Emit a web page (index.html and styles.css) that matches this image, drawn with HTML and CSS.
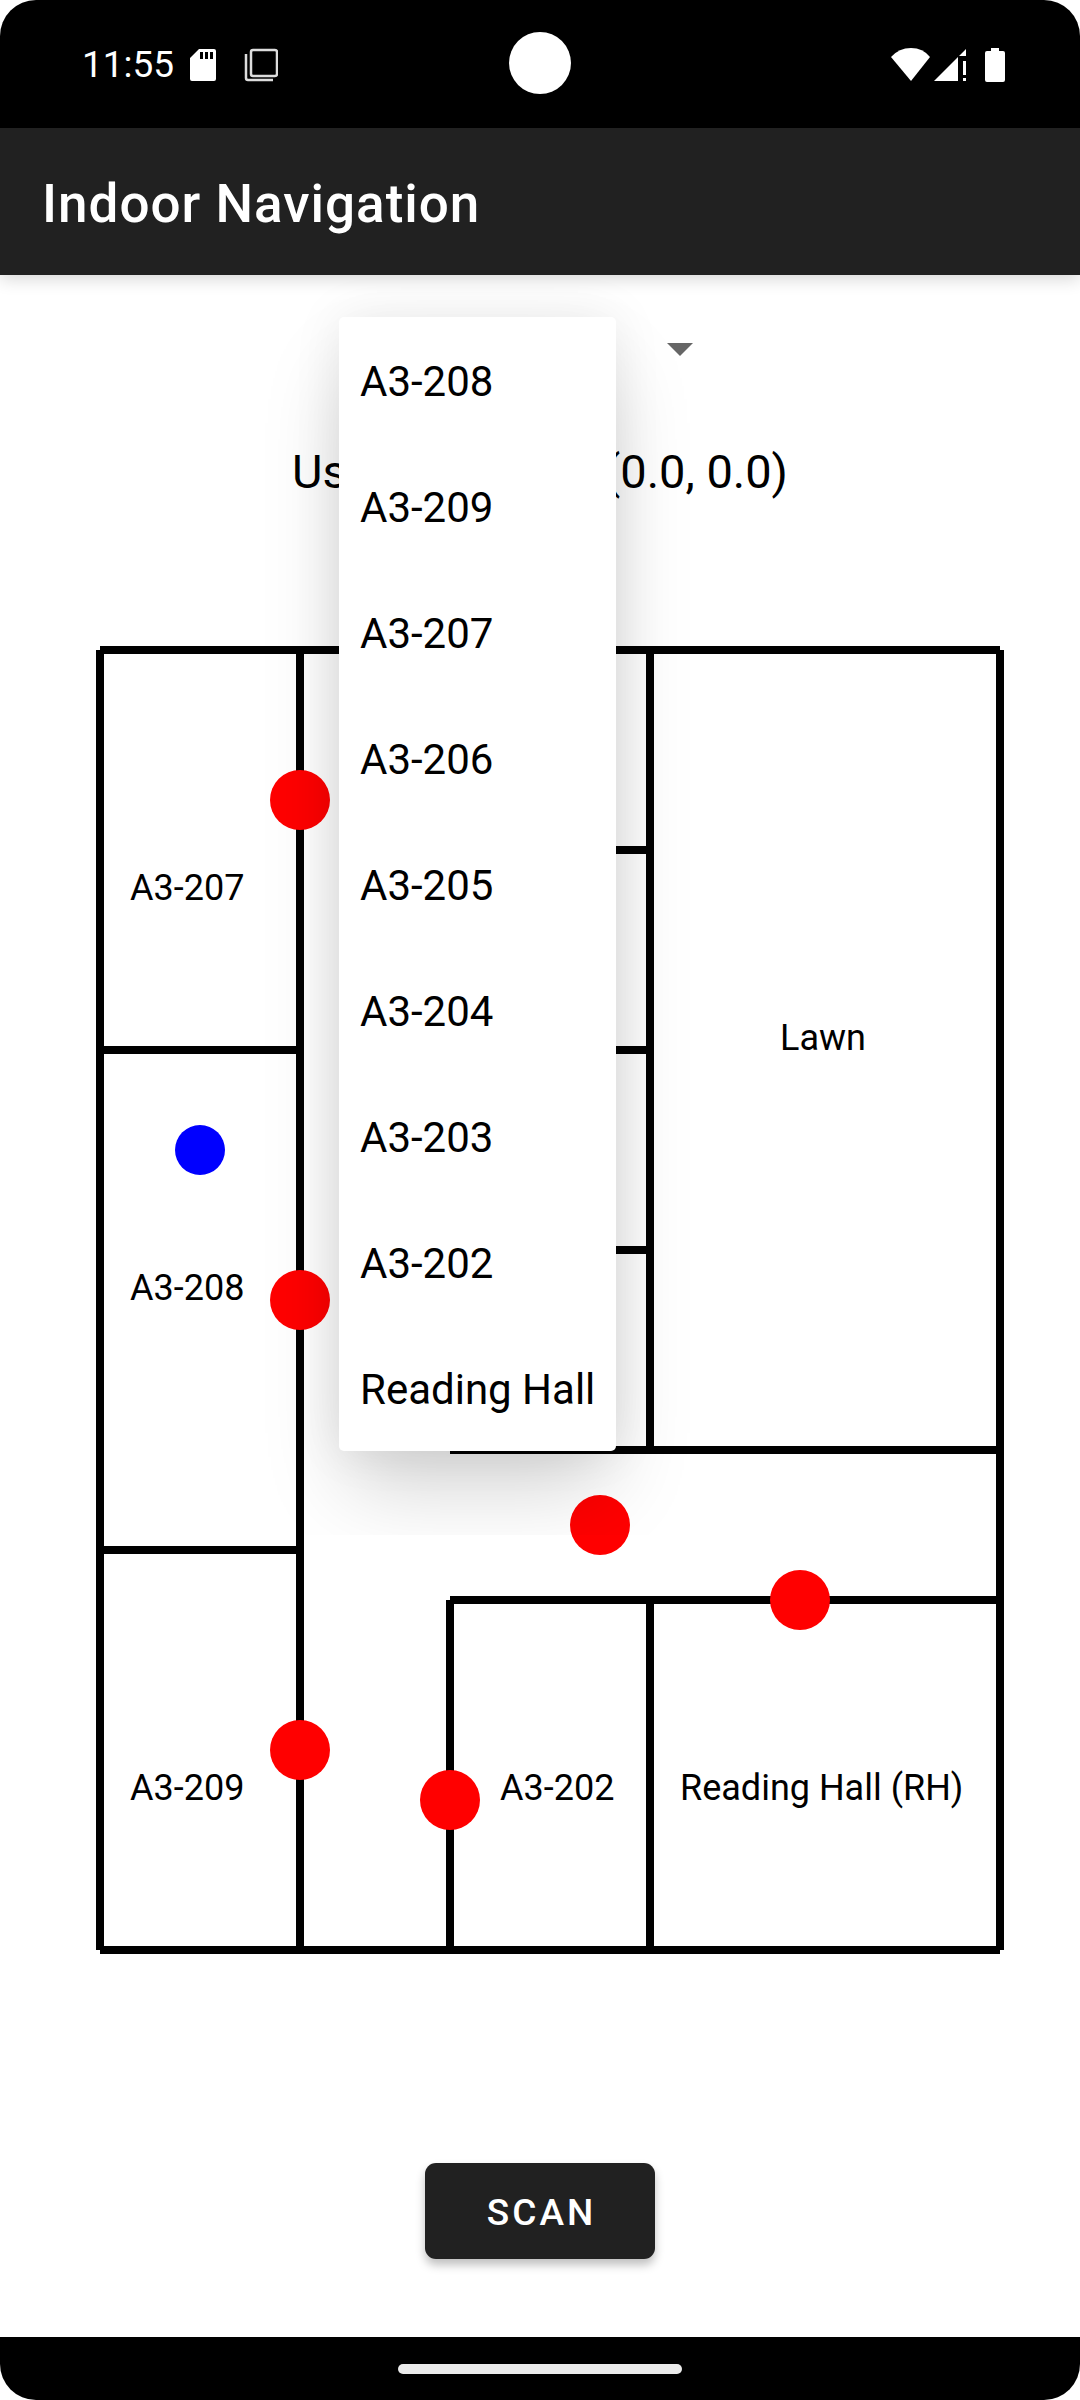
FILE: index.html
```html
<!DOCTYPE html>
<html lang="en">
<head>
  <meta charset="utf-8">
  <meta name="viewport" content="width=device-width, initial-scale=1">
  <title>Indoor Navigation</title>
  <link rel="stylesheet" href="styles.css">
</head>
<body>
  <div class="screen">
    <div class="status-bar">
      <div class="status-group">
        <time class="clock">11:55</time>
        <svg class="sd-icon" viewBox="0 0 26 32" aria-hidden="true">
          <path fill="#fff" fill-rule="evenodd" d="M9 0H24a2 2 0 0 1 2 2V30a2 2 0 0 1-2 2H2a2 2 0 0 1-2-2V9ZM10 3V10H13V3ZM15 3V10H18V3ZM20 3V10H23V3Z"/>
        </svg>
        <svg class="windows-icon" viewBox="0 0 34 34" fill="none" stroke="#ddd" aria-hidden="true">
          <rect x="7" y="2" width="26" height="26" rx="2" stroke-width="2.5"/>
          <path d="M2 6V30a2 2 0 0 0 2 2H29" stroke-width="2.5"/>
        </svg>
      </div>
      <span class="camera"></span>
      <div class="status-group">
        <svg class="network-icons" viewBox="0 0 76 34" fill="#fff" aria-hidden="true">
          <path d="M20 33 0 9Q8 0 20 0T39 9Z"/>
          <path d="M43 33 67 9V33ZM68 8 75 1V8ZM72 13H75V27H72ZM72 30H75V33H72Z"/>
        </svg>
        <svg class="battery-icon" viewBox="0 0 20 34" fill="#fff" aria-hidden="true">
          <path d="M6 0H14V3H18a2 2 0 0 1 2 2V32a2 2 0 0 1-2 2H2a2 2 0 0 1-2-2V5a2 2 0 0 1 2-2H6Z"/>
        </svg>
      </div>
    </div>

    <header class="app-bar">
      <h1 class="app-title">Indoor Navigation</h1>
    </header>

    <main class="content">
      <div class="spinner">
        <select class="spinner-select" aria-label="Destination">
          <option>A3-208</option>
          <option>A3-209</option>
          <option>A3-207</option>
          <option>A3-206</option>
          <option>A3-205</option>
          <option>A3-204</option>
          <option>A3-203</option>
          <option>A3-202</option>
          <option>Reading Hall</option>
        </select>
        <svg class="spinner-arrow" viewBox="0 0 26 13" aria-hidden="true">
          <path d="M0 0H26L13 13Z" fill="#666"/>
        </svg>
        <div class="menu">
          <button class="menu-item" type="button">A3-208</button>
          <button class="menu-item" type="button">A3-209</button>
          <button class="menu-item" type="button">A3-207</button>
          <button class="menu-item" type="button">A3-206</button>
          <button class="menu-item" type="button">A3-205</button>
          <button class="menu-item" type="button">A3-204</button>
          <button class="menu-item" type="button">A3-203</button>
          <button class="menu-item" type="button">A3-202</button>
          <button class="menu-item" type="button">Reading Hall</button>
        </div>
      </div>

      <p class="position">User Location: (0.0, 0.0)</p>

      <svg class="map" viewBox="0 600 1080 1400" role="img" aria-label="Floor plan">
        <g class="walls">
          <path d="M100 650H1000M100 1950H1000M100 650V1950M1000 650V1950"/>
          <path d="M300 650V1950M100 1050H300M100 1550H300"/>
          <path d="M450 650V1450M650 650V1450M450 850H650M450 1050H650M450 1250H650M450 1450H1000"/>
          <path d="M450 1600H1000M450 1600V1950M650 1600V1950"/>
        </g>
        <g class="doors">
          <circle cx="300" cy="800" r="30"/>
          <circle cx="300" cy="1300" r="30"/>
          <circle cx="300" cy="1750" r="30"/>
          <circle cx="450" cy="1800" r="30"/>
          <circle cx="600" cy="1525" r="30"/>
          <circle cx="800" cy="1600" r="30"/>
        </g>
        <circle class="user" cx="200" cy="1150" r="25"/>
        <g class="labels">
          <text x="130" y="900">A3-207</text>
          <text x="130" y="1300">A3-208</text>
          <text x="130" y="1800">A3-209</text>
          <text x="500" y="1800">A3-202</text>
          <text x="780" y="1050">Lawn</text>
          <text x="680" y="1800">Reading Hall (RH)</text>
        </g>
      </svg>

      <button class="scan" type="button">SCAN</button>
    </main>

    <div class="nav-bar"><span class="nav-handle"></span></div>
  </div>
</body>
</html>
```
FILE: styles.css
```css
* {
  box-sizing: border-box;
}

body {
  margin: 0;
  background: #fff;
  color: #000;
  font-family: Roboto, "Liberation Sans", sans-serif;
}

.screen {
  display: flex;
  flex-direction: column;
  min-height: 100vh;
  border-radius: 36px;
  overflow: hidden;
}

/* System status bar */
.status-bar {
  display: grid;
  grid-template-columns: 1fr auto 1fr;
  align-items: center;
  height: 128px;
  padding: 0 75px;
  background: #000;
}

.status-group {
  display: flex;
  align-items: center;
  padding-top: 2px;
}

.status-group:last-child {
  justify-content: flex-end;
}

.clock {
  margin-left: 7px;
  color: #fff;
  font-size: 37px;
  line-height: 44px;
}

.sd-icon {
  width: 26px;
  height: 32px;
  margin-left: 16px;
}

.windows-icon {
  width: 34px;
  height: 34px;
  margin-left: 28px;
}

.camera {
  width: 62px;
  height: 62px;
  margin-bottom: 3px;
  border-radius: 50%;
  background: #fff;
}

.network-icons {
  width: 76px;
  height: 34px;
}

.battery-icon {
  width: 20px;
  height: 34px;
  margin-left: 18px;
}

/* App bar */
.app-bar {
  display: flex;
  align-items: center;
  height: 147px;
  padding: 4px 42px 0;
  background: #212121;
  box-shadow: 0 4px 16px rgba(0, 0, 0, 0.16);
}

.app-title {
  margin: 0;
  color: #fff;
  font-size: 53px;
  font-weight: 500;
  line-height: 62px;
  letter-spacing: 1px;
}

/* Content */
.content {
  display: flex;
  flex: 1;
  flex-direction: column;
  align-items: center;
  padding: 42px 0 78px;
}

.spinner {
  position: relative;
  width: 402px;
  height: 63px;
}

.spinner-select {
  width: 100%;
  height: 100%;
  padding: 0 21px;
  border: 0;
  background: none;
  color: #000;
  font: 42px Roboto, "Liberation Sans", sans-serif;
  appearance: none;
}

.spinner-arrow {
  position: absolute;
  top: 26px;
  right: 48px;
  width: 26px;
  height: 13px;
}

.menu {
  position: absolute;
  z-index: 1;
  top: 0;
  left: 0;
  display: flex;
  flex-direction: column;
  width: 277px;
  border-radius: 5px;
  background: #fff;
  box-shadow: 0 44px 80px -10px rgba(0, 0, 0, 0.18), 0 0 50px rgba(0, 0, 0, 0.08);
  clip-path: inset(-42px -80px -84px -80px);
}

.menu-item {
  height: 126px;
  padding: 2px 21px 0;
  border: 0;
  background: none;
  color: #000;
  font: 42px Roboto, "Liberation Sans", sans-serif;
  text-align: left;
  white-space: nowrap;
}

.position {
  margin: 64px 0 0;
  font-size: 47px;
  line-height: 56px;
}

/* Floor plan */
.map {
  display: block;
  width: 100%;
  margin: 100px 0 auto;
}

.walls {
  fill: none;
  stroke: #000;
  stroke-width: 8px;
}

.doors {
  fill: #f00;
}

.user {
  fill: #00f;
}

.labels {
  font-size: 36px;
}

.scan {
  height: 96px;
  padding: 2px 59px 0 62px;
  border: 0;
  border-radius: 11px;
  background: #212121;
  box-shadow: 0 6px 10px rgba(0, 0, 0, 0.25);
  color: #fff;
  font: 500 37px Roboto, "Liberation Sans", sans-serif;
  letter-spacing: 3px;
}

/* System navigation bar */
.nav-bar {
  display: flex;
  align-items: center;
  justify-content: center;
  height: 63px;
  background: #000;
}

.nav-handle {
  width: 284px;
  height: 10px;
  border-radius: 5px;
  background: #ebebeb;
}
```
